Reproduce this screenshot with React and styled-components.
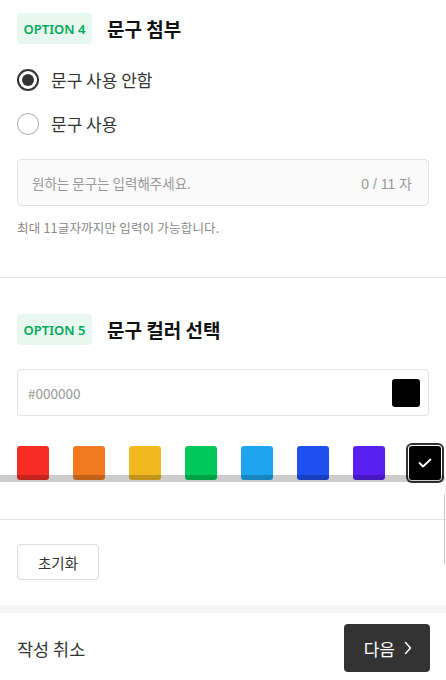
import React, { useState } from 'react';
import styled, { createGlobalStyle } from 'styled-components';

const GlobalStyle = createGlobalStyle`
  body {
    margin: 0;
    background: #fff;
    font-family: "Noto Sans CJK KR", "Noto Sans", sans-serif;
    color: #333;
  }
`;

const Page = styled.div`
  width: 446px;
  position: relative;
`;

const Section = styled.div`
  padding: ${(p) => p.top}px 17px 0;
  height: ${(p) => p.height}px;
  box-sizing: border-box;
  border-bottom: ${(p) => (p.divider ? '1px solid #e6e6e6' : 'none')};
`;

const Header = styled.div`
  display: flex;
  align-items: center;
  gap: 15px;
`;

const Badge = styled.span`
  display: inline-flex;
  align-items: center;
  justify-content: center;
  width: 75px;
  height: 31px;
  border-radius: 4px;
  background: #e8f7ef;
  color: #00a85a;
  font-family: "Noto Sans", sans-serif;
  font-size: 13px;
  font-weight: 600;
`;

const Title = styled.h3`
  margin: 0;
  font-size: 19px;
  font-weight: 700;
  color: #111;
  line-height: 1;
`;

const RadioList = styled.div`
  display: flex;
  flex-direction: column;
  gap: 21px;
  margin-top: 24px;
`;

const RadioRow = styled.label`
  display: flex;
  align-items: center;
  gap: 12px;
  height: 23px;
  font-size: 17px;
  color: #333;
  cursor: pointer;
`;

const RadioCircle = styled.span`
  width: 22px;
  height: 22px;
  box-sizing: border-box;
  border-radius: 50%;
  border: ${(p) => (p.checked ? '2px solid #333' : '1px solid #aaa')};
  display: flex;
  align-items: center;
  justify-content: center;
  &::after {
    content: '';
    display: ${(p) => (p.checked ? 'block' : 'none')};
    width: 12px;
    height: 12px;
    border-radius: 50%;
    background: #333;
  }
`;

const Field = styled.div`
  display: flex;
  align-items: center;
  justify-content: space-between;
  height: 47px;
  box-sizing: border-box;
  border: 1px solid #e2e2e2;
  border-radius: 4px;
  background: ${(p) => (p.muted ? '#fafafa' : '#fff')};
  padding: ${(p) => (p.muted ? '0 16px 0 14px' : '0 8px 0 10px')};
  margin-top: ${(p) => p.top}px;
  font-size: 13.5px;
  color: #999;
`;

const Counter = styled.span`
  font-family: "Liberation Sans", "Noto Sans CJK KR", sans-serif;
  font-size: 14px;
  color: #999;
`;

const Help = styled.p`
  margin: 12px 0 0;
  font-size: 12.5px;
  letter-spacing: 0.2px;
  color: #888;
`;

const ColorPreview = styled.span`
  width: 28px;
  height: 28px;
  border-radius: 3px;
  background: ${(p) => p.color};
`;

const SwatchRow = styled.div`
  display: flex;
  gap: 24px;
  margin-top: 30px;
`;

const Swatch = styled.button`
  flex-shrink: 0;
  width: 32px;
  height: 34px;
  padding: 0;
  border: none;
  border-radius: 3px;
  background: ${(p) => p.color};
  display: flex;
  align-items: center;
  justify-content: center;
  box-shadow: ${(p) => (p.selected ? '0 0 0 1px #fff, 0 0 0 3px #333' : 'none')};
  cursor: pointer;
`;

const Actions = styled.div`
  padding: 24px 17px 25px;
  border-bottom: 8px solid #f5f5f5;
`;

const ResetButton = styled.button`
  width: 82px;
  height: 36px;
  background: #fff;
  border: 1px solid #ddd;
  border-radius: 4px;
  font-family: inherit;
  font-size: 14.5px;
  color: #333;
`;

const Footer = styled.div`
  display: flex;
  align-items: center;
  justify-content: space-between;
  padding: 11px 16px 8px 17px;
`;

const Cancel = styled.span`
  font-size: 17.5px;
  color: #333;
`;

const NextButton = styled.button`
  display: flex;
  align-items: center;
  gap: 9px;
  height: 48px;
  padding: 0 18px 0 20px;
  border: none;
  border-radius: 4px;
  background: #333;
  color: #fff;
  font-family: inherit;
  font-size: 17px;
`;

const ScrollTrack = styled.div`
  position: absolute;
  left: 0;
  top: 475px;
  width: 445px;
  height: 7px;
  border-radius: 0 3px 3px 0;
  background: rgba(0, 0, 0, 0.2);
  pointer-events: none;
`;

const ScrollEdge = styled.div`
  position: absolute;
  left: 444px;
  top: 494px;
  width: 1px;
  height: 70px;
  background: #c8c8c8;
  pointer-events: none;
`;

const colors = ['#f52d22', '#f17a21', '#f2b822', '#00c85a', '#1ea5f0', '#1f4ff0', '#571ff0', '#000000'];

export default function App() {
  const [useText, setUseText] = useState(false);
  const [picked, setPicked] = useState('#000000');

  return (
    <Page>
      <GlobalStyle />
      <Section top={13} height={278} divider>
        <Header>
          <Badge>OPTION 4</Badge>
          <Title>문구 첨부</Title>
        </Header>
        <RadioList>
          <RadioRow onClick={() => setUseText(false)}>
            <RadioCircle checked={!useText} />
            문구 사용 안함
          </RadioRow>
          <RadioRow onClick={() => setUseText(true)}>
            <RadioCircle checked={useText} />
            문구 사용
          </RadioRow>
        </RadioList>
        <Field muted top={24}>
          <span>원하는 문구는 입력해주세요.</span>
          <Counter>0 / 11 자</Counter>
        </Field>
        <Help>최대 11글자까지만 입력이 가능합니다.</Help>
      </Section>

      <Section top={36} height={242} divider>
        <Header>
          <Badge>OPTION 5</Badge>
          <Title>문구 컬러 선택</Title>
        </Header>
        <Field top={24}>
          <span>{picked.toUpperCase()}</span>
          <ColorPreview color={picked} />
        </Field>
        <SwatchRow>
          {colors.map((c) => (
            <Swatch key={c} color={c} selected={picked === c} onClick={() => setPicked(c)}>
              {picked === c && (
                <svg width="14" height="10" viewBox="0 0 14 10" fill="none">
                  <path d="M1.5 5l3.5 3.5L12.5 1.5" stroke="#fff" strokeWidth="1.8" strokeLinecap="round" strokeLinejoin="round" />
                </svg>
              )}
            </Swatch>
          ))}
        </SwatchRow>
      </Section>

      <Actions>
        <ResetButton>초기화</ResetButton>
      </Actions>

      <Footer>
        <Cancel>작성 취소</Cancel>
        <NextButton>
          다음
          <svg width="8" height="14" viewBox="0 0 8 14" fill="none">
            <path d="M1.5 1.5L6.5 7l-5 5.5" stroke="#fff" strokeWidth="1.5" strokeLinecap="round" strokeLinejoin="round" />
          </svg>
        </NextButton>
      </Footer>

      <ScrollTrack />
      <ScrollEdge />
    </Page>
  );
}
